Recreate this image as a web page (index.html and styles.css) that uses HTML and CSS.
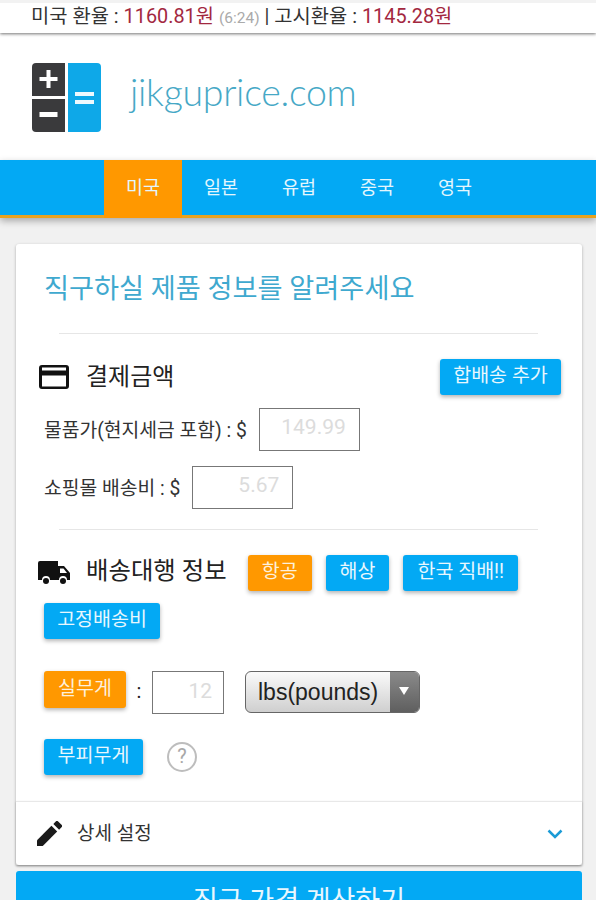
FILE: index.html
```html
<!DOCTYPE html>
<html lang="ko">
<head>
<meta charset="utf-8">
<title>jikguprice.com</title>
<link rel="stylesheet" href="styles.css">
</head>
<body>
<div class="topbar">미국 환율 : <b class="rate">1160.81원</b> <span class="time">(6:24)</span> | 고시환율 : <b class="rate">1145.28원</b></div>
<header class="brand">
  <svg class="logo" width="69" height="69" viewBox="0 0 69 69" aria-hidden="true">
    <path d="M4 0H33V33H0V4A4 4 0 0 1 4 0Z" fill="#3a3a3c"/>
    <path d="M0 36H33V69H4A4 4 0 0 1 0 65Z" fill="#3a3a3c"/>
    <path d="M36 0H65A4 4 0 0 1 69 4V65A4 4 0 0 1 65 69H36Z" fill="#0ea8e8"/>
    <path d="M14.500 7H18.500V14H25.500V18H18.500V25H14.500V18H7.500V14H14.500Z" fill="#fff"/>
    <rect x="7.500" y="49" width="18" height="5" fill="#fff"/>
    <rect x="43" y="29" width="19" height="4" fill="#eef9fe"/>
    <rect x="43" y="37" width="19" height="4" fill="#eef9fe"/>
  </svg>
  <span class="wordmark">jikguprice.com</span>
</header>
<nav class="nav">
  <a class="tab active">미국</a><a class="tab">일본</a><a class="tab">유럽</a><a class="tab">중국</a><a class="tab">영국</a>
</nav>
<main class="page">
  <section class="card">
    <div class="card-body">
      <h1 class="title">직구하실 제품 정보를 알려주세요</h1>
      <hr class="rule">
      <div class="pay-head">
        <svg class="icon-card" width="30" height="24" viewBox="0 0 30 24" aria-hidden="true">
          <path fill-rule="evenodd" d="M3 0H27A3 3 0 0 1 30 3V21A3 3 0 0 1 27 24H3A3 3 0 0 1 0 21V3A3 3 0 0 1 3 0ZM3 2.500V5.500H27V2.500ZM3 10.500V21.500H27V10.500Z" fill="#111"/>
        </svg>
        <h2 class="section-title pay-title">결제금액</h2>
        <button class="btn add-btn">합배송 추가</button>
      </div>
      <div class="field price-field"><label class="label">물품가(현지세금 포함) : $</label><input class="num wide" placeholder="149.99"></div>
      <div class="field ship-field"><label class="label">쇼핑몰 배송비 : $</label><input class="num wide" placeholder="5.67"></div>
      <hr class="rule rule-two">
      <div class="agent">
        <svg class="icon-truck" width="32" height="24" viewBox="0 0 32 24" aria-hidden="true">
          <path d="M2 0H20V5H26L32 12V19H29A4 4 0 0 0 21 19H12A4 4 0 0 0 4 19H0V2A2 2 0 0 1 2 0Z" fill="#111"/>
          <path d="M22 7.500H25.500L29 12H22Z" fill="#fff"/>
          <circle cx="8" cy="20" r="3" fill="#111"/><circle cx="25" cy="20" r="3" fill="#111"/>
        </svg>
        <h2 class="section-title agent-title">배송대행 정보</h2>
        <button class="btn orange">항공</button>
        <button class="btn">해상</button>
        <button class="btn">한국 직배!!</button>
        <button class="btn fixed-btn">고정배송비</button>
      </div>
      <div class="weight">
        <button class="btn orange">실무게</button>
        <span class="colon">:</span>
        <input class="num small" placeholder="12">
        <div class="select"><span class="select-text">lbs(pounds)</span><span class="select-arrow"></span></div>
      </div>
      <div class="volume">
        <button class="btn">부피무게</button>
        <span class="help">?</span>
      </div>
    </div>
    <div class="details">
      <svg width="25" height="25" viewBox="0 0 26 26" aria-hidden="true">
        <path d="M0 26V20L15 5L21 11L6 26Z" fill="#1a1a1a"/>
        <path d="M17 3L19.500 0.500A1.700 1.700 0 0 1 22 0.500L25.500 4A1.700 1.700 0 0 1 25.500 6.500L23 9Z" fill="#1a1a1a"/>
      </svg>
      <span class="details-text">상세 설정</span>
      <svg class="chevron" width="16" height="10" viewBox="0 0 16 10" aria-hidden="true">
        <path d="M1.500 1.500L8 8L14.500 1.500" fill="none" stroke="#1b9bd6" stroke-width="2.500"/>
      </svg>
    </div>
  </section>
  <button class="submit">직구 가격 계산하기</button>
</main>
</body>
</html>
```
FILE: styles.css
```css
* { box-sizing: border-box; }
html, body { margin: 0; height: 900px; overflow: hidden; }
body {
  background: #f1f1f1;
  font-family: "Roboto", "Noto Sans CJK KR", sans-serif;
  color: #333;
}
.topbar {
  height: 33px;
  padding: 3px 0 0 31px;
  background: #fff;
  border-top: 3px solid #f2f2f2;
  font-size: 19.850px;
  line-height: 22px;
  color: #333;
  box-shadow: 0 1px 3px rgba(0,0,0,.55);
  position: relative;
  white-space: nowrap;
}
.rate { font-weight: 400; color: #a3283f; }
.time { font-size: 15.500px; color: #aaa; }
.brand {
  height: 127px;
  background: #fff;
  display: flex;
  align-items: flex-start;
  padding: 30px 0 0 32px;
}
.logo { flex: none; }
.wordmark {
  margin: 4px 0 0 29px;
  font-family: "Lato", sans-serif;
  font-weight: 300;
  font-size: 37.500px;
  line-height: 50px;
  letter-spacing: -.3px;
  color: #46a8c6;
}
.nav {
  height: 58px;
  background: #03a9f4;
  border-bottom: 3px solid #e9a21e;
  padding-left: 104px;
  display: flex;
  box-shadow: 0 3px 7px rgba(0,0,0,.3);
  position: relative;
}
.tab {
  width: 78px;
  height: 58px;
  flex: none;
  font-size: 18.500px;
  line-height: 57px;
  text-align: center;
  color: #e4f6fd;
}
.tab.active { background: #ff9800; }
.page { padding: 26px 14px 0 16px; }
.card {
  background: #fff;
  border-radius: 3px;
  box-shadow: 0 1px 3px rgba(0,0,0,.3);
  height: 621px;
  display: flex;
  flex-direction: column;
}
.card-body { flex: 1; padding: 0 21px 0 28px; }
.title {
  margin: 0;
  padding-top: 25px;
  height: 89px;
  font-size: 27.200px;
  line-height: 40px;
  font-weight: 400;
  color: #3fa9cf;
  white-space: nowrap;
}
.rule {
  margin: 0 23px 0 15px;
  border: 0;
  border-top: 1px solid #e6e6e6;
}
.pay-head {
  display: flex;
  align-items: center;
  height: 36px;
  margin-top: 25px;
  margin-left: -5px;
}
.section-title {
  margin: 0 0 4px;
  font-weight: 400;
  color: #222;
  white-space: nowrap;
}
.pay-title { font-size: 24px; margin: 0 0 6px 17px; }
.btn {
  height: 36px;
  padding: 0 14px 2px;
  border: 0;
  border-radius: 3px;
  background: #03a9f4;
  color: #e8f7fe;
  font: 400 19.500px/32px "Roboto", "Noto Sans CJK KR", sans-serif;
  box-shadow: 0 2px 4px rgba(0,0,0,.3);
  white-space: nowrap;
}
.btn.orange { background: #ff9800; color: #fdf0dc; }
.add-btn { margin-left: auto; width: 121px; padding: 0 0 2px; }
.field { display: flex; align-items: center; height: 42px; }
.price-field { margin-top: 13px; }
.ship-field { margin-top: 16px; }
.label { font-size: 19.300px; color: #333; white-space: nowrap; margin-right: 12px; }
.num {
  border: 1.500px solid #777;
  background: #fff;
  text-align: right;
  padding: 0 13px 4px;
  font: 400 21px "Roboto", sans-serif;
  color: #333;
  border-radius: 0;
  outline: 0;
}
.num::placeholder { color: #dcdcdc; opacity: 1; }
.num.wide { width: 101px; height: 43px; }
.num.small { width: 72px; height: 43px; padding: 0 11px 4px; }
.rule-two { margin-top: 21px; }
.agent {
  display: flex;
  flex-wrap: wrap;
  align-items: center;
  margin-top: 25px;
  column-gap: 14px;
  row-gap: 12px;
}
.icon-truck { margin-left: -6px; flex: none; }
.agent-title { font-size: 24.400px; line-height: 28px; margin: 0 7px 4px 2px; }
.agent .fixed-btn { width: 116px; padding: 0 0 2px; }
.weight { display: flex; align-items: flex-start; margin-top: 32px; }
.weight .btn { width: 82px; padding: 0 0 2px; height: 37px; }
.colon { font-size: 20px; width: 26px; text-align: center; line-height: 40px; color: #222; }
.select {
  width: 175px;
  height: 42px;
  margin-left: 21px;
  border: 1px solid #666;
  border-radius: 6px;
  display: flex;
  overflow: hidden;
  background: linear-gradient(#fafafa, #cfcfcf);
}
.select-text { flex: 1; font: 400 23px/40px "Liberation Sans", sans-serif; color: #222; padding-left: 12px; white-space: nowrap; }
.select-arrow {
  width: 29px;
  flex: none;
  background: linear-gradient(#8a8a8a, #5f5f5f);
  position: relative;
}
.select-arrow::after {
  content: "";
  position: absolute;
  left: 9px;
  top: 15px;
  border: 5px solid transparent;
  border-top: 8px solid #fff;
  border-bottom: 0;
}
.volume { display: flex; align-items: center; margin-top: 25px; }
.volume .btn { width: 99px; padding: 0 0 2px; }
.help {
  width: 30px;
  height: 30px;
  margin-left: 24px;
  border: 2.500px solid #bdbdbd;
  border-radius: 50%;
  color: #a8a8a8;
  font-size: 20px;
  line-height: 25px;
  text-align: center;
}
.details {
  height: 64px;
  border-top: 1px solid #e8e8e8;
  display: flex;
  align-items: center;
  padding: 0 19px 0 21px;
  flex: none;
  box-shadow: 0 1px 2px rgba(0,0,0,.25);
}
.details-text { font-size: 19px; color: #333; margin: 0 0 5px 15px; }
.chevron { margin-left: auto; }
.submit {
  display: block;
  width: 100%;
  height: 60px;
  margin-top: 6px;
  border: 0;
  border-radius: 3px;
  background: #03a9f4;
  color: #e8f7fe;
  font: 400 27px/52px "Roboto", "Noto Sans CJK KR", sans-serif;
  padding: 0;
  text-align: center;
}
```
